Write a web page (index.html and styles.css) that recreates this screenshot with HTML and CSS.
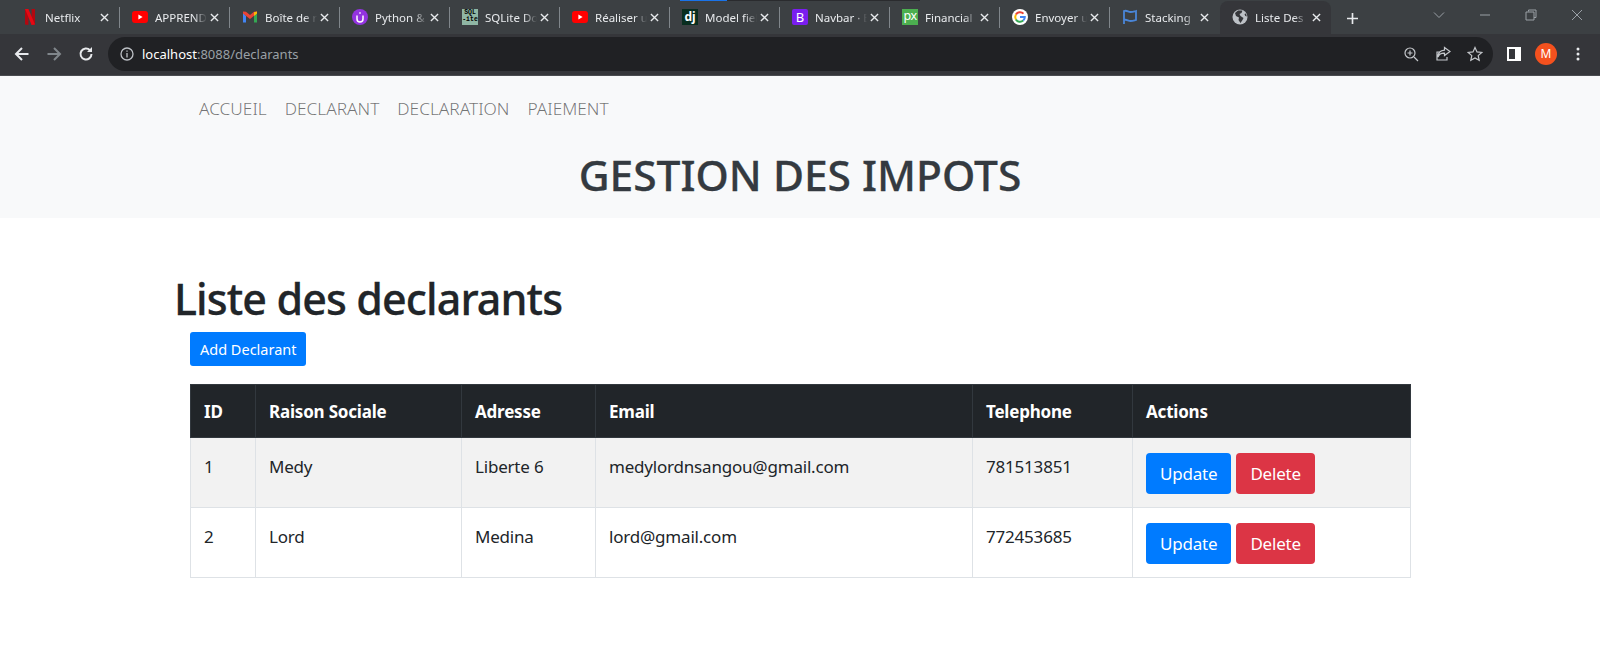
FILE: index.html
```html
<!DOCTYPE html>
<html lang="fr">
<head>
<meta charset="utf-8">
<title>Liste des declarants</title>
<link rel="stylesheet" href="styles.css">
</head>
<body>
<div class="browser">
  <div class="strip">
    <div class="loadline"><div class="loadfill"></div></div>
    <div class="tabs">
      <div class="tab"><svg class="fav" viewBox="0 0 16 16"><path fill="#b20710" d="M3 0h3.4v16L3 15.6z"/><path fill="#b20710" d="M9.6 0H13v15.6l-3.4.4z"/><path fill="#e50914" d="M3 0h3.4l6.6 15.6-3.4.4z"/></svg><span class="ttl">Netflix</span><svg class="x" viewBox="0 0 10 10"><path d="M1 1l8 8M9 1l-8 8"/></svg></div>
      <div class="tab"><svg class="fav" viewBox="0 0 16 16"><rect y="2" width="16" height="12" rx="3" fill="#f00"/><path fill="#fff" d="M6.4 5.5v5L10.6 8z"/></svg><span class="ttl">APPRENDRE</span><svg class="x" viewBox="0 0 10 10"><path d="M1 1l8 8M9 1l-8 8"/></svg></div>
      <div class="tab"><svg class="fav" viewBox="0 0 16 16"><path fill="#4285f4" d="M1 3.500V13.500h3V7z"/><path fill="#34a853" d="M12 7v6.500h3V3.500z"/><path fill="#ea4335" d="M1 2.500 4 2.700 8 6l4-3.300 3-.2v2L8 10 1 4.500z"/><path fill="#fbbc04" d="M15 2.500V4.500L12 7V3.200z"/></svg><span class="ttl">Boîte de réception</span><svg class="x" viewBox="0 0 10 10"><path d="M1 1l8 8M9 1l-8 8"/></svg></div>
      <div class="tab"><svg class="fav" viewBox="0 0 16 16"><circle cx="8" cy="8" r="8" fill="#9333e0"/><path fill="none" stroke="#fff" stroke-width="1.500" d="M5 6.500V10a3 3 0 0 0 6 0V6.500"/><path stroke="#fff" stroke-width="1.500" d="M8 3.200v1.500"/></svg><span class="ttl">Python &amp; SQL</span><svg class="x" viewBox="0 0 10 10"><path d="M1 1l8 8M9 1l-8 8"/></svg></div>
      <div class="tab"><span class="fav sql">SQL<br>-ite</span><span class="ttl">SQLite Doc</span><svg class="x" viewBox="0 0 10 10"><path d="M1 1l8 8M9 1l-8 8"/></svg></div>
      <div class="tab"><svg class="fav" viewBox="0 0 16 16"><rect y="2" width="16" height="12" rx="3" fill="#f00"/><path fill="#fff" d="M6.400 5.500v5L10.600 8z"/></svg><span class="ttl">Réaliser un</span><svg class="x" viewBox="0 0 10 10"><path d="M1 1l8 8M9 1l-8 8"/></svg></div>
      <div class="tab"><span class="fav dj">dj</span><span class="ttl">Model field</span><svg class="x" viewBox="0 0 10 10"><path d="M1 1l8 8M9 1l-8 8"/></svg></div>
      <div class="tab"><span class="fav bs">B</span><span class="ttl">Navbar · Bootstrap</span><svg class="x" viewBox="0 0 10 10"><path d="M1 1l8 8M9 1l-8 8"/></svg></div>
      <div class="tab"><span class="fav px">px</span><span class="ttl">Financial</span><svg class="x" viewBox="0 0 10 10"><path d="M1 1l8 8M9 1l-8 8"/></svg></div>
      <div class="tab"><svg class="fav" viewBox="0 0 16 16"><circle cx="8" cy="8" r="8" fill="#fff"/><path fill="none" stroke="#ea4335" stroke-width="2" d="M11.500 4.600A4.800 4.800 0 0 0 3.900 5.600"/><path fill="none" stroke="#fbbc04" stroke-width="2" d="M3.900 5.600a4.800 4.800 0 0 0 0 4.800"/><path fill="none" stroke="#34a853" stroke-width="2" d="M3.900 10.400a4.800 4.800 0 0 0 7.300 1.200"/><path fill="none" stroke="#4285f4" stroke-width="2" d="M11.200 11.600A4.800 4.800 0 0 0 12.800 8H8"/></svg><span class="ttl">Envoyer un</span><svg class="x" viewBox="0 0 10 10"><path d="M1 1l8 8M9 1l-8 8"/></svg></div>
      <div class="tab tab-last"><svg class="fav" viewBox="0 0 16 16"><path fill="none" stroke="#4a86d8" stroke-width="1.800" d="M2 15V2c3-1 4 1 6.500 1S12 2.500 14 2v9c-2 .5-3 1-5.500 1S4.500 10 2 11"/></svg><span class="ttl">Stacking</span><svg class="x" viewBox="0 0 10 10"><path d="M1 1l8 8M9 1l-8 8"/></svg></div>
      <div class="tab tab-active"><svg class="fav" viewBox="0 0 16 16"><circle cx="8" cy="8" r="7.500" fill="#bdc1c6"/><path fill="#35363a" d="M6 1.500 3 4l1 3 3 1.500L6.500 11l2 3 2-3 1-2-3-2-1-2 2-1 1-2.500zM12.500 5l1.500-.500.800 3-1.500-.500z"/></svg><span class="ttl">Liste Des declarants</span><svg class="x" viewBox="0 0 10 10"><path d="M1 1l8 8M9 1l-8 8"/></svg></div>
      <svg class="plus" viewBox="0 0 12 12"><path d="M6 0v12M0 6h12"/></svg>
      <div class="winctl">
        <svg class="wc" viewBox="0 0 12 12"><path d="M1 3.500l5 5 5-5"/></svg>
        <svg class="wc" viewBox="0 0 12 12"><path d="M1 6h10"/></svg>
        <svg class="wc" viewBox="0 0 12 12"><path d="M3.500 2.500V1H11v7.500H9M1 3h8v8H1z"/></svg>
        <svg class="wc" viewBox="0 0 12 12"><path d="M1 1l10 10M11 1 1 11"/></svg>
      </div>
    </div>
  </div>
  <div class="toolbar">
    <svg class="nav-ic" viewBox="0 0 16 16"><path d="M14.500 8H2M8 2 2 8l6 6"/></svg>
    <svg class="nav-ic dim" viewBox="0 0 16 16"><path d="M1.500 8H14M8 2l6 6-6 6"/></svg>
    <svg class="nav-ic" viewBox="0 0 16 16"><path d="M13.500 8A5.500 5.500 0 1 1 12 4.200"/><path class="solid" d="M14 1v5H9z"/></svg>
    <div class="omni">
      <svg class="info" viewBox="0 0 14 14"><circle cx="7" cy="7" r="6"/><path d="M7 6v4.500M7 3.500v1.300"/></svg>
      <span class="url"><span class="host">localhost</span>:8088/declarants</span>
      <svg class="om-ic" viewBox="0 0 16 16"><circle cx="7" cy="7" r="5"/><path d="M11 11l4 4M7 4.500v5M4.500 7h5"/></svg>
      <svg class="om-ic" viewBox="0 0 16 16"><path d="M9.500 1.500 15 5.500l-5.500 4V7.200C6 7 4 8.500 3 11c0-4 2.500-6.500 6.500-6.800zM12 11v3H2V6h2"/></svg>
      <svg class="om-ic" viewBox="0 0 16 16"><path d="M8 1.500l2 4.400 4.800.5-3.600 3.200 1 4.700L8 11.900l-4.200 2.400 1-4.700L1.200 6.400 6 5.900z"/></svg>
    </div>
    <svg class="side" viewBox="0 0 14 14"><rect width="14" height="14" fill="#fff"/><rect x="2" y="2" width="6" height="10" fill="#35363a"/></svg>
    <span class="avatar">M</span>
    <svg class="dots" viewBox="0 0 4 14"><circle cx="2" cy="2" r="1.500"/><circle cx="2" cy="7" r="1.500"/><circle cx="2" cy="12" r="1.500"/></svg>
  </div>
</div>

<header class="site">
  <nav class="menu">
    <a class="menu-link">ACCUEIL</a>
    <a class="menu-link">DECLARANT</a>
    <a class="menu-link">DECLARATION</a>
    <a class="menu-link">PAIEMENT</a>
  </nav>
  <div class="site-title">GESTION DES IMPOTS</div>
</header>

<main class="content">
  <h1 class="page-title">Liste des declarants</h1>
  <a class="btn btn-sm btn-blue add">Add Declarant</a>
  <table class="grid">
    <colgroup>
      <col class="c1"><col class="c2"><col class="c3"><col class="c4"><col class="c5"><col class="c6">
    </colgroup>
    <thead>
      <tr><th>ID</th><th>Raison Sociale</th><th>Adresse</th><th>Email</th><th>Telephone</th><th>Actions</th></tr>
    </thead>
    <tbody>
      <tr class="odd">
        <td>1</td><td>Medy</td><td>Liberte 6</td><td>medylordnsangou@gmail.com</td><td>781513851</td>
        <td><div class="acts"><a class="btn btn-blue">Update</a><a class="btn btn-red">Delete</a></div></td>
      </tr>
      <tr>
        <td>2</td><td>Lord</td><td>Medina</td><td>lord@gmail.com</td><td>772453685</td>
        <td><div class="acts"><a class="btn btn-blue">Update</a><a class="btn btn-red">Delete</a></div></td>
      </tr>
    </tbody>
  </table>
</main>
</body>
</html>
```
FILE: styles.css
```css
* { box-sizing: border-box; }
html, body { margin: 0; height: 100%; overflow: hidden; }
body { background: #fff; font-family: "Noto Sans", "Open Sans", sans-serif; color: #212529; }

/* browser chrome */
.browser { height: 76px; display: flex; flex-direction: column; }
.strip { height: 34px; background: #3c4043; display: flex; flex-direction: column; }
.loadline { height: 1px; width: 240px; margin-left: 680px; background: #2a2b2e; flex: none; }
.loadfill { height: 1px; width: 47px; background: #1a73e8; }
.tabs { display: flex; align-items: stretch; flex: 1; padding-left: 10px; }
.tab { width: 110px; flex: none; display: flex; align-items: center; padding-left: 12px; padding-right: 10px; border-right: 1px solid #80868b; margin: 6px 0; }
.tab-last { border-right-color: transparent; }
.tab-active { width: 111px; margin: 0; background: #35363a; border-right: 0; border-radius: 8px 8px 0 0; }
.fav { width: 16px; height: 16px; flex: none; display: block; }
.ttl { width: 52px; margin-left: 7px; overflow: hidden; white-space: nowrap; font-size: 11.500px; color: #e8eaed; -webkit-mask-image: linear-gradient(to right, #000 75%, transparent 100%); mask-image: linear-gradient(to right, #000 75%, transparent 100%); }
.x { width: 9px; height: 9px; margin-left: auto; flex: none; fill: none; stroke: #e8eaed; stroke-width: 1.500; }
.sql { background: #8fb6a4; color: #000; font: bold 6.500px/7px "Liberation Mono", monospace; text-align: center; overflow: hidden; }
.dj { background: #092e20; color: #fff; font: bold 12px/15px "Noto Sans", sans-serif; text-align: center; }
.bs { background: #7a1df0; color: #fff; font: 13px/16px "Noto Sans", sans-serif; text-align: center; border-radius: 2px; }
.px { background: #4caf50; color: #fff; font: 12.500px/13px "Noto Sans", sans-serif; text-align: center; letter-spacing: -.5px; overflow: hidden; }
.plus { width: 11px; height: 11px; margin: 12px 0 0 16px; fill: none; stroke: #e8eaed; stroke-width: 1.800; flex: none; }
.winctl { margin-left: auto; display: flex; gap: 34px; padding: 8px 17px 0 0; }
.wc { width: 12px; height: 12px; fill: none; stroke: #9aa0a6; stroke-width: 1; }

.toolbar { height: 43px; background: #35363a; display: flex; align-items: center; padding-left: 14px; border-bottom: 1px solid #4a4c50; }
.nav-ic { width: 16px; height: 16px; margin-right: 16px; fill: none; stroke: #e8eaed; stroke-width: 2; flex: none; }
.nav-ic.dim { stroke: #80868b; }
.solid { fill: #e8eaed; stroke: none; }
.omni { width: 1385px; height: 34px; margin-left: -2px; margin-right: 14px; background: #202124; border-radius: 17px; display: flex; align-items: center; padding: 0 10px 0 12px; flex: none; }
.info { width: 14px; height: 14px; fill: none; stroke: #bdc1c6; stroke-width: 1.300; flex: none; }
.url { margin-left: 8px; font-size: 13px; color: #9aa0a6; flex: 1; }
.host { color: #fff; }
.om-ic { width: 16px; height: 16px; margin-left: 16px; fill: none; stroke: #c4c7cb; stroke-width: 1.200; flex: none; }
.side { width: 14px; height: 14px; flex: none; }
.avatar { width: 22px; height: 22px; border-radius: 50%; background: #f4511e; color: #fff; font-size: 12px; line-height: 22px; text-align: center; margin-left: 14px; flex: none; }
.dots { width: 4px; height: 14px; margin-left: 19px; fill: #e8eaed; flex: none; }

/* site header */
.site { height: 142px; background: #f8f9fa; padding: 18px 0 0 199px; }
.menu { display: flex; gap: 18px; height: 28px; align-items: center; }
.menu-link { font-size: 17.300px; font-weight: 300; color: rgba(0,0,0,.55); }
.site-title { margin: 26px 0 0 -199px; text-align: center; font-size: 42.500px; line-height: 54px; font-weight: 500; color: #343a40; -webkit-text-stroke: .3px #343a40; }

/* content */
.content { padding-left: 174px; }
.page-title { margin: 51px 0 3px; font-size: 43px; line-height: 60px; font-weight: 500; letter-spacing: -.9px; color: #212529; -webkit-text-stroke: .3px #212529; }
.btn { display: inline-block; height: 41px; padding: 0 14px; border-radius: 4px; color: #fff; font-size: 17px; letter-spacing: -.2px; line-height: 41px; }
.btn-sm { height: 34px; line-height: 34px; padding: 0 10px; font-size: 14.500px; letter-spacing: 0; border-radius: 3px; }
.btn-blue { background: #007bff; }
.btn-red { background: #dc3545; }
.add { display: block; width: 116px; margin: 0 0 18px 16px; white-space: nowrap; }

.grid { table-layout: fixed; width: 1220px; margin-left: 16px; border-collapse: collapse; font-size: 17px; letter-spacing: -.2px; }
.c1 { width: 65px; } .c2 { width: 206px; } .c3 { width: 134px; } .c4 { width: 377px; } .c5 { width: 160px; } .c6 { width: 278px; }
.grid th { height: 53px; background: #212529; color: #fff; font-weight: 700; text-align: left; padding: 0 13px; border: 1px solid #32383e; }
.grid td { height: 70px; padding: 15px 13px 13px; vertical-align: top; border: 1px solid #dee2e6; line-height: 28px; }
.odd td { background: #f2f2f2; }
.acts { display: flex; gap: 5px; }
```
